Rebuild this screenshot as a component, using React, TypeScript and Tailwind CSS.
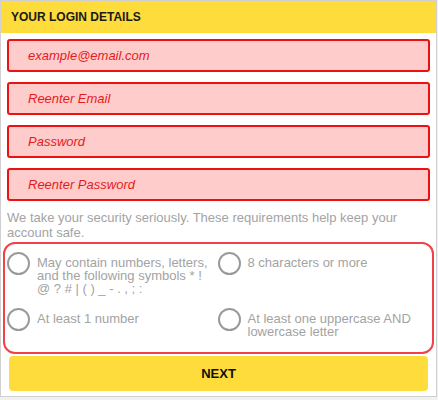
import React from "react";

const fields = ["example@email.com", "Reenter Email", "Password", "Reenter Password"];

const rules = [
  "May contain numbers, letters, and the following symbols * ! @ ? # | ( ) _ - . , ; :",
  "8 characters or more",
  "At least 1 number",
  "At least one uppercase AND lowercase letter",
];

const Circle = () => (
  <span className="h-[23px] w-[23px] shrink-0 rounded-full border-2 border-[#9a9a9a]" />
);

export default function App() {
  return (
    <div className="h-[400px] w-[438px] bg-[#f1f1f1] font-['Liberation_Sans',Arial,sans-serif]">
      <div className="h-[397px] w-[437px] border border-[#d0d0d0] bg-white">
        <div className="flex h-[32px] items-center bg-[#fddc3b] px-[10px] text-[12px] font-bold text-[#1a1a1a]">
          YOUR LOGIN DETAILS
        </div>
        <div className="flex flex-col px-[6px] pt-[6px]">
          <div className="flex flex-col gap-[10px]">
            {fields.map((f) => (
              <div
                key={f}
                className="flex h-[33px] items-center rounded-[3px] border-2 border-[#ee1111] bg-[#ffcccc] pl-[19px] text-[13px] italic text-[#e51b1b]"
              >
                {f}
              </div>
            ))}
          </div>
          <p className="mt-[9px] text-[13px] leading-[15px] text-[#a3a3a3]">
            We take your security seriously. These requirements help keep your account safe.
          </p>
          <div className="-mx-[4px] mt-[2px] grid h-[112px] grid-cols-2 content-start gap-y-[13px] rounded-[12px] border-2 border-[#f04248] pl-[2px] pr-[4px] pt-[8px]">
            {rules.map((r) => (
              <div key={r} className="flex items-start gap-[7px]">
                <Circle />
                <span className="pr-[4px] pt-[4px] text-[13px] leading-[13px] text-[#a3a3a3]">{r}</span>
              </div>
            ))}
          </div>
          <button className="mx-[2px] mt-[2px] h-[35px] rounded-[4px] bg-[#fddc3b] text-[13px] font-bold text-[#111]">
            NEXT
          </button>
        </div>
      </div>
    </div>
  );
}
